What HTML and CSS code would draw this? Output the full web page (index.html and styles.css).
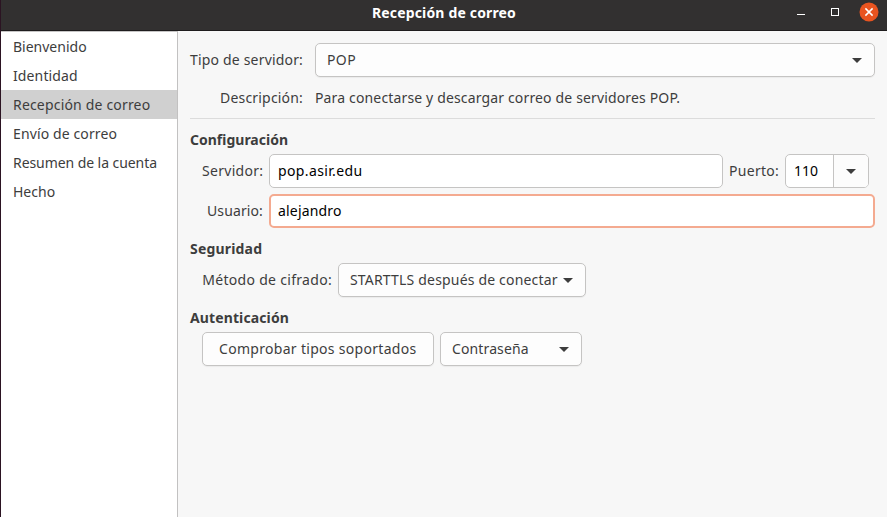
FILE: index.html
```html
<!DOCTYPE html>
<html lang="es">
<head>
<meta charset="utf-8">
<title>Recepción de correo</title>
<link rel="stylesheet" href="styles.css">
</head>
<body>
<div class="window">
  <header class="titlebar">
    <h1 class="title">Recepción de correo</h1>
    <div class="controls">
      <svg class="ctl" viewBox="0 0 10 10"><path d="M1 7.5h8" stroke="#fff"/></svg>
      <svg class="ctl" viewBox="0 0 10 10"><rect x="1.5" y="1.5" width="7" height="7" fill="none" stroke="#fff"/></svg>
      <svg class="close" viewBox="0 0 20 20"><circle cx="10" cy="10" r="9.5" fill="#e95420"/><path d="M6.4 6.4l7.2 7.2M13.6 6.4l-7.2 7.2" stroke="#fff" stroke-width="1.5"/></svg>
    </div>
  </header>
  <div class="content">
    <nav class="steps">
      <a class="step">Bienvenido</a>
      <a class="step track-s">Identidad</a>
      <a class="step track-m current">Recepción de correo</a>
      <a class="step track-s">Envío de correo</a>
      <a class="step track-n">Resumen de la cuenta</a>
      <a class="step">Hecho</a>
    </nav>
    <main class="page">
      <div class="row type-row">
        <label class="label type-label track-m">Tipo de servidor:</label>
        <div class="button combo grow"><span class="track-x">POP</span><svg class="arrow" viewBox="0 0 10 5"><path d="M0 0h10L5 5z"/></svg></div>
      </div>
      <div class="row desc-row">
        <label class="label type-label track-m">Descripción:</label>
        <p class="desc">Para conectarse y descargar correo de servidores POP.</p>
      </div>
      <hr class="line">
      <h2 class="heading">Configuración</h2>
      <div class="row inset">
        <label class="label field-label track-l">Servidor:</label>
        <div class="entry server track-x">pop.asir.edu</div>
        <label class="label port-label track-l">Puerto:</label>
        <div class="spin"><span class="port">110</span><span class="port-arrow"><svg class="arrow" viewBox="0 0 10 5"><path d="M0 0h10L5 5z"/></svg></span></div>
      </div>
      <div class="row inset user-row">
        <label class="label field-label track-s">Usuario:</label>
        <div class="entry focused grow track-m">alejandro</div>
      </div>
      <h2 class="heading track-m">Seguridad</h2>
      <div class="row inset">
        <label class="label method-label track-l">Método de cifrado:</label>
        <div class="button combo method"><span class="track-m">STARTTLS después de conectar</span><svg class="arrow" viewBox="0 0 10 5"><path d="M0 0h10L5 5z"/></svg></div>
      </div>
      <h2 class="heading track-s">Autenticación</h2>
      <div class="row inset">
        <div class="button check track-l">Comprobar tipos soportados</div>
        <div class="button combo auth"><span class="track-s">Contraseña</span><svg class="arrow" viewBox="0 0 10 5"><path d="M0 0h10L5 5z"/></svg></div>
      </div>
    </main>
  </div>
</div>
</body>
</html>
```
FILE: styles.css
```css
* { box-sizing: border-box; }
body {
  margin: 0;
  background: #f7f7f7;
  color: #3d3d3d;
  font: 14px/20px "Noto Sans", sans-serif;
  overflow: hidden;
}
.window { height: 517px; display: flex; flex-direction: column; border-left: 1px solid #2b1322; }
.titlebar {
  height: 31px;
  flex: none;
  display: grid;
  grid-template-columns: 1fr auto 1fr;
  background: #323030;
  border-bottom: 1px solid #1e1c1d;
}
.title { grid-column: 2; margin: 3px 0 0; font-size: 14px; line-height: 20px; letter-spacing: .16px; color: #fff; }
.controls { display: flex; justify-content: flex-end; align-items: flex-start; padding: 2px 8px 0 0; }
.ctl { width: 10px; height: 10px; margin: 5px 24px 0 0; }
.ctl + .ctl { margin-right: 19px; }
.close { width: 20px; height: 20px; }
.content { flex: 1; display: flex; min-height: 0; }
.steps { width: 177px; flex: none; background: #fff; border-top: 1px solid #c6c5c5; border-right: 1px solid #c2c1c1; }
.step { display: block; height: 29px; padding: 5px 0 0 12px; line-height: 20px; white-space: nowrap; }
.current { background: #d0d0d0; }
.page { flex: 1; min-width: 0; padding: 12px 12px 0; }
.row { display: flex; align-items: center; gap: 6px; }
.label { flex: none; text-align: right; white-space: nowrap; }
.type-label { width: 113px; }
.type-row, .desc-row { gap: 12px; }
.desc-row { margin-top: 11px; }
.desc { margin: 0; letter-spacing: .15px; white-space: nowrap; }
.line { height: 1px; margin: 10px 0 11px; border: 0; background: #dcdcdc; }
.heading { margin: 11px 0 4px; font-size: 14px; line-height: 20px; }
.inset { padding-left: 12px; }
.field-label { width: 61px; }
.user-row { margin-top: 6px; }
.button, .entry { height: 34px; border: 1px solid #c5c4c3; border-radius: 5px; line-height: 32px; white-space: nowrap; }
.button { background: #fdfdfd; box-shadow: 0 1px 1px rgba(0, 0, 0, .05); }
.combo { display: flex; align-items: center; justify-content: space-between; padding: 0 12px 0 11px; }
.grow { flex: 1; }
.arrow { width: 10px; height: 5px; fill: #3d3d3d; flex: none; }
.entry { padding-left: 8px; background: #fff; color: #000; }
.focused { border: 2px solid #f4aa90; padding-left: 7px; line-height: 30px; }
.server { width: 454px; }
.port-label { width: 50px; }
.spin { width: 84px; height: 34px; display: flex; border: 1px solid #c5c4c3; border-radius: 5px; overflow: hidden; background: #fff; color: #000; line-height: 32px; }
.port { width: 47px; padding-left: 8px; }
.port-arrow { flex: 1; display: flex; align-items: center; justify-content: center; border-left: 1px solid #c5c4c3; background: #fcfcfc; }
.method-label { width: 130px; }
.method { width: 248px; }
.check { width: 232px; padding-left: 16px; }
.auth { width: 142px; }
.track-n { letter-spacing: -.07px; }
.track-s { letter-spacing: .12px; }
.track-m { letter-spacing: .18px; }
.track-l { letter-spacing: .3px; }
.track-x { letter-spacing: .37px; }
```
